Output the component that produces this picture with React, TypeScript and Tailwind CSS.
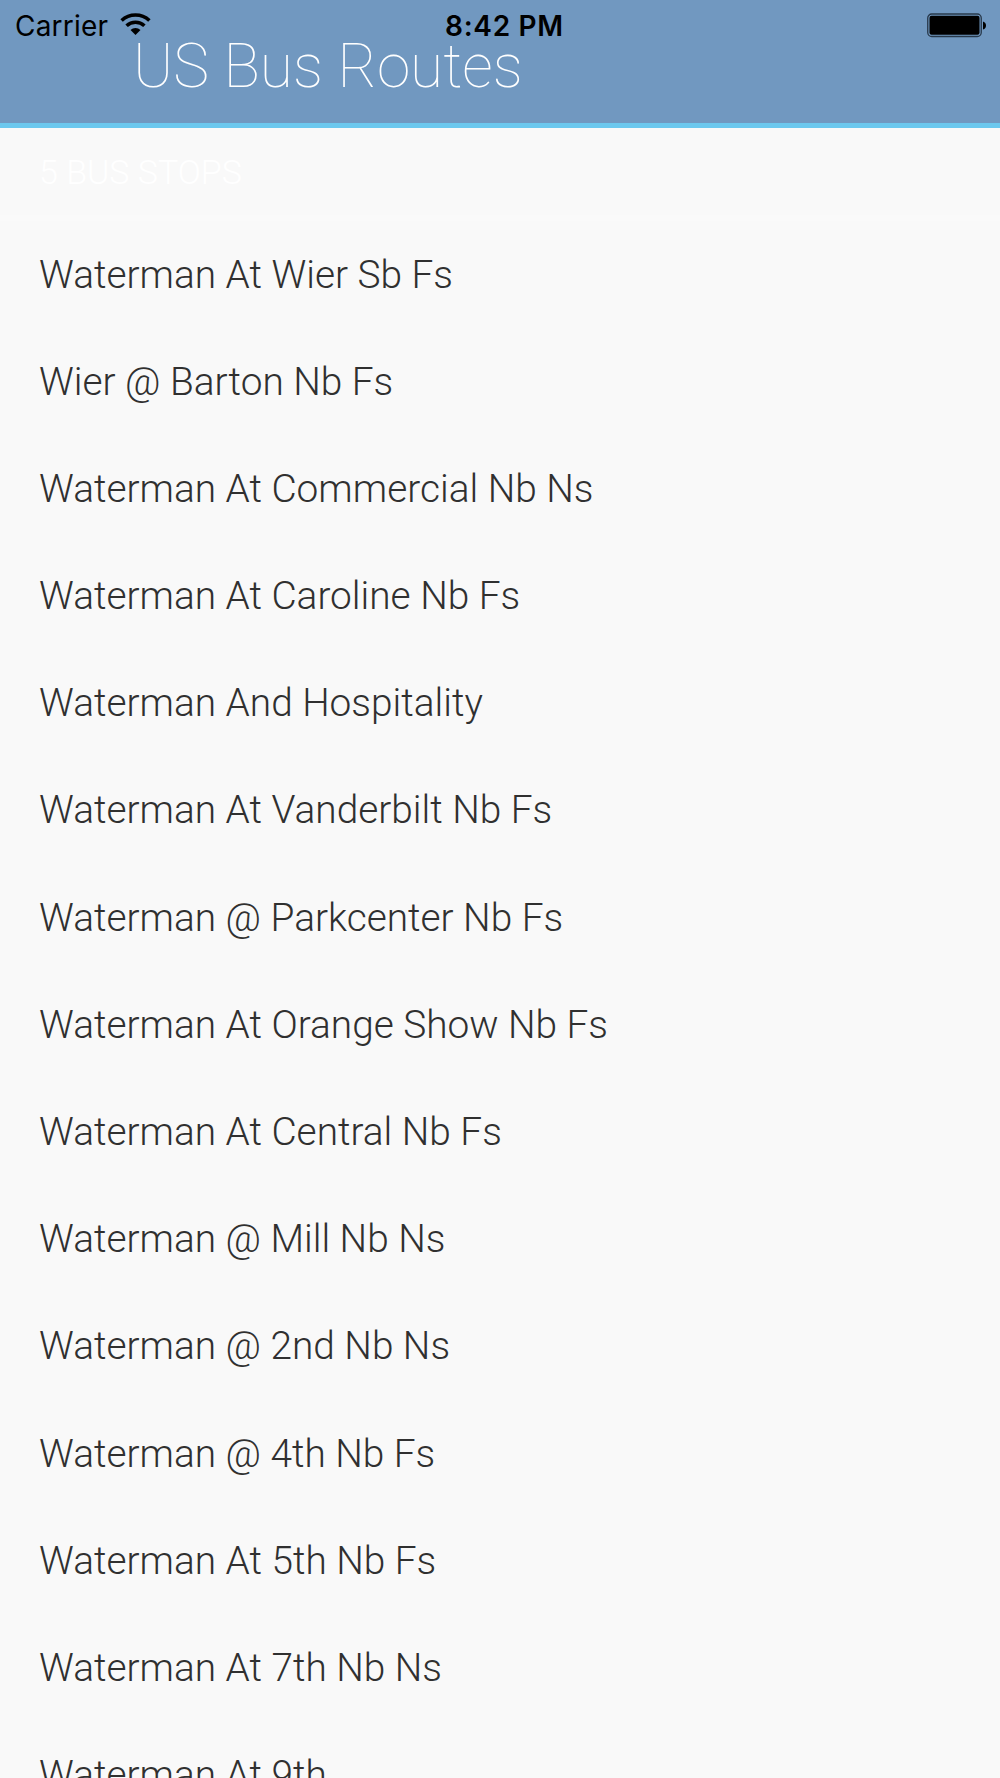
import React from 'react';

const stops = [
  'Waterman At Wier Sb Fs',
  'Wier @ Barton Nb Fs',
  'Waterman At Commercial Nb Ns',
  'Waterman At Caroline Nb Fs',
  'Waterman And Hospitality',
  'Waterman At Vanderbilt Nb Fs',
  'Waterman @ Parkcenter Nb Fs',
  'Waterman At Orange Show Nb Fs',
  'Waterman At Central Nb Fs',
  'Waterman @ Mill Nb Ns',
  'Waterman @ 2nd Nb Ns',
  'Waterman @ 4th Nb Fs',
  'Waterman At 5th Nb Fs',
  'Waterman At 7th Nb Ns',
  'Waterman At 9th',
];

const StatusBar: React.FC = () => (
  <div className="absolute inset-x-0 top-0 flex h-[50px] items-center justify-between pl-[15px] pr-[14px] font-['Inter',sans-serif] text-black">
    <div className="flex flex-1 items-center gap-3">
      <span className="pt-[2px] text-[28px] tracking-[0.2px]">Carrier</span>
      <svg className="mb-[2px]" width="31" height="22" viewBox="0 0 31 22" fill="none" stroke="black" strokeWidth="3.6">
        <path d="M1.600 7.500a20.500 20.500 0 0 1 27.800 0" />
        <path d="M6.600 12.700a13 13 0 0 1 17.800 0" />
        <path d="M15.500 22l-5-5a7.200 7.200 0 0 1 10 0z" fill="black" stroke="none" />
      </svg>
    </div>
    <span className="pl-2 pt-[2px] text-[28px] font-semibold tracking-[0.7px]">8:42 PM</span>
    <div className="flex flex-1 justify-end">
      <svg width="59" height="25" viewBox="0 0 59 25">
        <rect x="0.750" y="1" width="53.500" height="22.500" rx="4" fill="none" stroke="#27384a" strokeWidth="1.300" />
        <rect x="2.500" y="2.700" width="50" height="19" rx="2" />
        <path d="M56 8.500q3 1 3 4t-3 4z" />
      </svg>
    </div>
  </div>
);

const App: React.FC = () => {
  return (
    <div className="h-[1778px] overflow-hidden bg-[#f9f9f9] font-['Roboto',sans-serif]">
      <header className="relative h-32 border-b-[5px] border-[#6cc8ee] bg-[#7198c0]">
        <h1 className="pl-[133px] pt-[23px] text-[60.4px] leading-[88px] font-thin text-white">US Bus Routes</h1>
        <StatusBar />
      </header>
      <h2 className="h-[92.5px] border-b-[6px] border-[#fafafa] pl-[39px] pt-6 text-[34px] leading-[40px] font-light text-white">
        5 BUS STOPS
      </h2>
      <ul>
        {stops.map((stop) => (
          <li key={stop} className="flex h-[107.2px] items-center pl-[39px] pt-px text-[38.8px] font-light text-[#303030]">
            {stop}
          </li>
        ))}
      </ul>
    </div>
  );
};

export default App;
